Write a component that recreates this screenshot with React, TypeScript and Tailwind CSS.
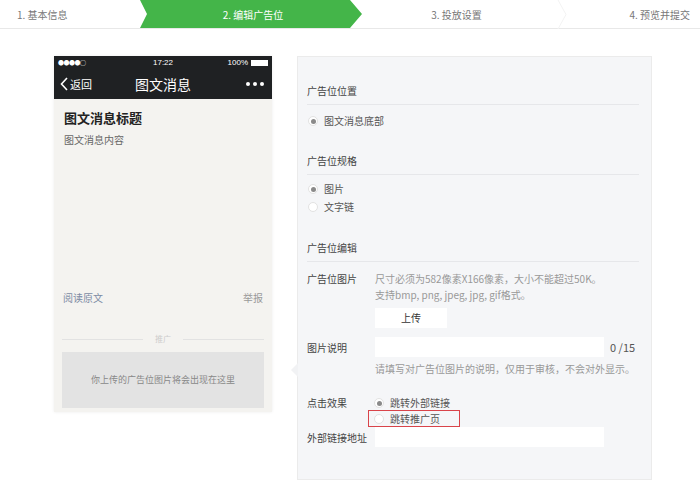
import { ReactNode } from "react"

const font = "font-['Microsoft_YaHei','Noto_Sans_CJK_SC',sans-serif]"

function Radio({ checked }: { checked?: boolean }) {
    return <span className="w-[10px] h-[10px] rounded-full bg-white border border-[#e2e2e2] flex items-center justify-center shrink-0">
        {checked ? <span className="w-[5px] h-[5px] rounded-full bg-[#8a8a8a]"></span> : null}
    </span>
}

function SectionHead({ title }: { title: string }) {
    return <div className="mr-[12px] border-b border-[#e6e7ea] pb-[6px] leading-[14px] text-[10px] text-[#444]">{title}</div>
}

function Row({ label, children, className }: { label: string, children: ReactNode, className?: string }) {
    return <div className={"flex " + (className || "")}>
        <div className="w-[68px] shrink-0 text-[10px] text-[#444]">{label}</div>
        <div className="flex-1">{children}</div>
    </div>
}

function Steps() {
    return <div className="h-[29px] border-b border-[#e8e8e8] flex text-[10px] text-[#777] relative">
        <div className="w-[140px] flex items-center pl-[17px]">1. 基本信息</div>
        <div className="w-[222px] bg-[#44b549] text-white flex items-center justify-center pl-[4px] [clip-path:polygon(0_0,210px_0,100%_50%,210px_100%,0_100%,7px_50%)]">2. 编辑广告位</div>
        <div className="w-[195px] flex items-center justify-center pr-[6px]">3. 投放设置</div>
        <svg width="10" height="29" className="shrink-0"><polyline points="1,0 9,14.5 1,29" fill="none" stroke="#f3f3f3" strokeWidth="1" /></svg>
        <div className="flex-1 flex items-center justify-end pr-[10px]">4. 预览并提交</div>
    </div>
}

function Phone() {
    return <div className="w-[218px] h-[356px] bg-[#f4f3f0] flex flex-col shadow-[0_0_3px_rgba(0,0,0,0.08)]">
        <div className="bg-[#1f2123] h-[43px] flex flex-col text-white">
            <div className="h-[13px] flex items-center justify-between px-[4px] text-[8px] leading-none relative">
                <span className="text-[6px] tracking-[-0.5px]">●●●●○</span>
                <span className="absolute left-1/2 -translate-x-1/2 font-['Liberation_Sans',sans-serif]">17:22</span>
                <span className="flex items-center gap-[3px] font-['Liberation_Sans',sans-serif]">100%
                    <span className="w-[17px] h-[6px] bg-white"></span>
                </span>
            </div>
            <div className="flex-1 flex items-center justify-between px-[6px] relative">
                <span className="flex items-center text-[11px]">
                    <svg width="9" height="14" viewBox="0 0 9 14"><polyline points="7,1 1.5,7 7,13" fill="none" stroke="white" strokeWidth="1.6" /></svg>
                    <span className="ml-[1px]">返回</span>
                </span>
                <span className="absolute left-1/2 -translate-x-1/2 text-[14px]">图文消息</span>
                <span className="flex gap-[3px] mr-[2px]">
                    <span className="w-[4px] h-[4px] rounded-full bg-white"></span>
                    <span className="w-[4px] h-[4px] rounded-full bg-white"></span>
                    <span className="w-[4px] h-[4px] rounded-full bg-white"></span>
                </span>
            </div>
        </div>
        <div className="px-[10px] pt-[10px]">
            <div className="text-[13px] font-semibold text-[#222] leading-[18px]">图文消息标题</div>
            <div className="text-[10px] text-[#666] mt-[6px] leading-[14px]">图文消息内容</div>
        </div>
        <div className="flex justify-between px-[9px] mt-[144px] text-[10px] leading-[14px]">
            <span className="text-[#7c8ba4]">阅读原文</span>
            <span className="text-[#999]">举报</span>
        </div>
        <div className="flex items-center px-[8px] mt-[29px] gap-[12px] h-[10px]">
            <span className="flex-1 h-px bg-[#e2e2e2]"></span>
            <span className="text-[8px] text-[#ccc] leading-[10px]">推广</span>
            <span className="flex-1 h-px bg-[#e2e2e2]"></span>
        </div>
        <div className="mx-[8px] mt-[8px] h-[56px] bg-[#e3e3e3] flex items-center justify-center text-[9px] text-[#888]">你上传的广告位图片将会出现在这里</div>
    </div>
}

function Panel() {
    return <div className="w-[355px] h-[424px] bg-[#f5f6f8] border border-[#ebebeb] relative pl-[9px] pt-[27px]">
        <div className="absolute left-[-7px] top-[306px] w-0 h-0 border-y-[7px] border-y-transparent border-r-[7px] border-r-[#f1f2f4]"></div>
        <SectionHead title="广告位位置" />
        <div className="flex items-center gap-[6px] mt-[9px] ml-[1px] text-[10px] text-[#555] leading-[14px]"><Radio checked />图文消息底部</div>

        <div className="mt-[26px]"><SectionHead title="广告位规格" /></div>
        <div className="flex items-center gap-[6px] mt-[7px] ml-[1px] text-[10px] text-[#555] leading-[14px]"><Radio checked />图片</div>
        <div className="flex items-center gap-[6px] mt-[4px] ml-[1px] text-[10px] text-[#555] leading-[14px]"><Radio />文字链</div>

        <div className="mt-[27px]"><SectionHead title="广告位编辑" /></div>

        <Row label="广告位图片" className="mt-[9px] leading-[16px]">
            <div className="text-[10px] text-[#999] leading-[16px]">
                <div>尺寸必须为582像素X166像素，大小不能超过50K。</div>
                <div>支持bmp, png, jpeg, jpg, gif格式。</div>
            </div>
            <button className="mt-[5px] w-[72px] h-[20px] bg-white text-[10px] text-[#333] flex items-center justify-center">上传</button>
        </Row>

        <Row label="图片说明" className="mt-[9px] items-center">
            <div className="flex items-center">
                <div className="w-[229px] h-[20px] bg-white"></div>
                <span className="ml-[6px] text-[11px] text-[#555]">0 /15</span>
            </div>
        </Row>
        <div className="ml-[68px] mt-[5px] text-[10px] text-[#999] leading-[14px]">请填写对广告位图片的说明，仅用于审核，不会对外显示。</div>

        <Row label="点击效果" className="mt-[20px] leading-[14px]">
            <div className="flex items-center gap-[6px] ml-[-1px] text-[10px] text-[#555] leading-[14px]"><Radio checked />跳转外部链接</div>
            <div className="ml-[-7px] w-[92px] h-[17px] border border-[#d9444a] flex items-center gap-[6px] pl-[5px] text-[10px] text-[#555]"><Radio />跳转推广页</div>
        </Row>

        <Row label="外部链接地址" className="items-center">
            <div className="w-[229px] h-[20px] bg-white"></div>
        </Row>
    </div>
}

export default function App() {
    return <div className={"w-[700px] h-[484px] bg-white overflow-hidden " + font}>
        <Steps />
        <div className="flex pt-[27px] pl-[54px] gap-[25px]">
            <Phone />
            <Panel />
        </div>
    </div>
}
